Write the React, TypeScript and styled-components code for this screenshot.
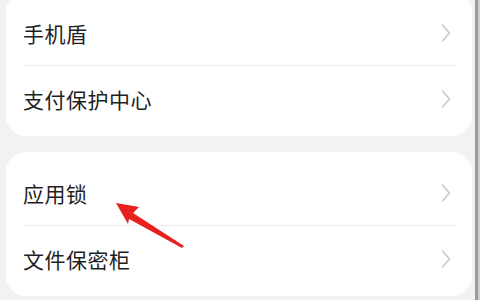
import React from "react";
import styled, { createGlobalStyle } from "styled-components";

const Global = createGlobalStyle`
  html, body { margin: 0; padding: 0; background: #f1f2f4; }
  body { font-family: "Noto Sans CJK SC", "Noto Sans", sans-serif; overflow: hidden; }
`;

const Screen = styled.div`
  position: relative;
  width: 480px;
  height: 300px;
  display: flex;
  overflow: hidden;
  background: #f1f2f4;
`;

const Content = styled.div`
  flex: 1;
  display: flex;
  flex-direction: column;
  gap: 16px;
  padding: 0 3px 0 6px;
`;

const Edge = styled.div`
  width: 5px;
  display: flex;
  &::before { content: ""; width: 3px; background: #9a9a9a; }
  &::after { content: ""; width: 2px; background: #cfcfcf; }
`;

const Card = styled.div<{ $offTop?: boolean }>`
  background: #ffffff;
  border-radius: 20px;
  padding: 8px 0 5px;
  margin-top: ${(p) => (p.$offTop ? "-8px" : "0")};
  display: flex;
  flex-direction: column;
`;

const Row = styled.div`
  height: 65px;
  display: flex;
  align-items: center;
  justify-content: space-between;
  padding: 0 20px 0 17px;
`;

const Label = styled.span`
  font-size: 21px;
  color: #1f1f1f;
  letter-spacing: 0.5px;
`;

const Divider = styled.div`
  height: 1px;
  background: #ececec;
  margin: 0 17px 0 17px;
`;

const Chevron = () => (
  <svg width="12" height="20" viewBox="0 0 12 20">
    <path d="M2.5 2 L9.5 10 L2.5 18" fill="none" stroke="#c9c9c9" strokeWidth="1.6" strokeLinecap="round" strokeLinejoin="round" />
  </svg>
);

const ArrowLayer = styled.svg`
  position: absolute;
  left: 0;
  top: 0;
  pointer-events: none;
`;

const items1 = ["手机盾", "支付保护中心"];
const items2 = ["应用锁", "文件保密柜"];

const Group = ({ items, offTop }: { items: string[]; offTop?: boolean }) => (
  <Card $offTop={offTop}>
    {items.map((t, i) => (
      <React.Fragment key={t}>
        {i > 0 && <Divider />}
        <Row>
          <Label>{t}</Label>
          <Chevron />
        </Row>
      </React.Fragment>
    ))}
  </Card>
);

export default function App() {
  return (
    <>
      <Global />
      <Screen>
        <Content>
          <Group items={items1} offTop />
          <Group items={items2} />
        </Content>
        <Edge />
        <ArrowLayer width="480" height="300" viewBox="0 0 480 300">
          <polygon
            points="116,203 139,207 133,213 184,246 182,248 129,219 128,224"
            fill="#e8201e"
          />
        </ArrowLayer>
      </Screen>
    </>
  );
}
